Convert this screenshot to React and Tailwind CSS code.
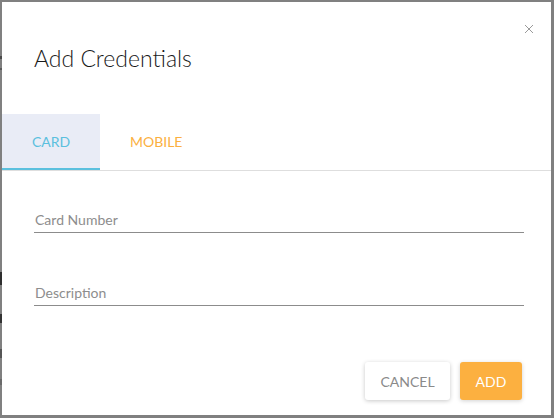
import { useState } from 'react'

const font = { fontFamily: 'Lato, "Open Sans", sans-serif' }

function Field({ label, className = '' }) {
  return (
    <div className={`ml-[32px] mr-[27px] border-b border-[#8c8c8c] pb-[2px] ${className}`}>
      <div className="pl-[1px] text-[14px] leading-[20px] text-[#8d8d8d]">{label}</div>
    </div>
  )
}

export default function App() {
  const [tab, setTab] = useState('card')

  return (
    <div className="relative w-[554px] h-[418px] bg-[#808080] pt-[2px] pl-[2px] pr-[3px] pb-[3px]" style={font}>
      {/* bits of the page behind, peeking at the left edge */}
      <div className="absolute left-0 top-[56px] w-[2px] h-[3px] bg-[#4a4a4a]" />
      <div className="absolute left-0 top-[68px] w-[2px] h-[2px] bg-[#5a5a5a]" />
      <div className="absolute left-0 top-[272px] w-[2px] h-[13px] bg-[#2e2e2e]" />
      <div className="absolute left-0 top-[314px] w-[2px] h-[9px] bg-[#333]" />
      <div className="absolute left-0 top-[349px] w-[2px] h-[9px] bg-[#555]" />
      <div className="absolute left-0 top-[379px] w-[2px] h-[6px] bg-[#6a6a6a]" />

      <div className="relative flex flex-col w-full h-full bg-white">
        <button className="absolute right-[18px] top-[23px] w-[8px] h-[8px] text-[#9a9a9a]">
          <svg viewBox="0 0 8 8" width="8" height="8" stroke="currentColor" strokeWidth="1" fill="none">
            <path d="M0 0L8 8M8 0L0 8" />
          </svg>
        </button>

        <div className="h-[112px] px-[32px] pt-[40px]">
          <h2 className="text-[23px] leading-[32px] text-[#1a1a1a] font-light">Add Credentials</h2>
        </div>

        <div className="flex border-b border-[#dedede]">
          <button
            onClick={() => setTab('card')}
            className={`h-[56px] w-[98px] border-b-2 text-[14px] ${tab === 'card' ? 'bg-[#e9ecf6] border-[#5bc0de] text-[#5bc0de]' : 'border-transparent text-[#fbb040]'}`}
          >
            CARD
          </button>
          <button
            onClick={() => setTab('mobile')}
            className={`h-[56px] px-[30px] border-b-2 text-[14px] ${tab === 'mobile' ? 'bg-[#e9ecf6] border-[#5bc0de] text-[#5bc0de]' : 'border-transparent text-[#fbb040]'}`}
          >
            MOBILE
          </button>
        </div>

        <Field label={tab === 'card' ? 'Card Number' : 'Mobile Number'} className="mt-[39px]" />
        <Field label="Description" className="mt-[50px]" />

        <div className="flex justify-end gap-[10px] mt-[56px] mr-[29px]">
          <button className="h-[38px] w-[85px] rounded-[3px] bg-white text-[14px] text-[#8a8a8a] shadow-[0_1px_4px_rgba(0,0,0,0.22)]">
            CANCEL
          </button>
          <button className="h-[38px] w-[62px] rounded-[3px] bg-[#fcb040] text-[14px] text-white shadow-[0_1px_4px_rgba(0,0,0,0.18)]">
            ADD
          </button>
        </div>
      </div>
    </div>
  )
}
